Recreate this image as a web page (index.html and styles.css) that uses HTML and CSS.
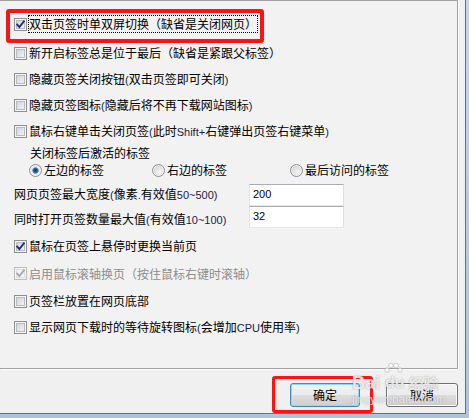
FILE: index.html
```html
<!DOCTYPE html>
<html lang="zh-CN">
<head>
<meta charset="utf-8">
<title>页签设置</title>
<link rel="stylesheet" href="styles.css">
</head>
<body>
<div class="dialog">
  <div class="panel">
    <div class="row row-first">
      <span class="cb"><svg class="tick" viewBox="0 0 9 9"><path d="M1.2 4.6 L3.4 7 L7.9 1.4"/></svg></span>
      <span class="lbl focus">双击页签时单双屏切换（缺省是关闭网页）</span>
    </div>
    <div class="row"><span class="cb"></span><span class="lbl">新开启标签总是位于最后（缺省是紧跟父标签）</span></div>
    <div class="row"><span class="cb"></span><span class="lbl">隐藏页签关闭按钮<span class="en">(</span>双击页签即可关闭<span class="en">)</span></span></div>
    <div class="row"><span class="cb"></span><span class="lbl">隐藏页签图标<span class="en">(</span>隐藏后将不再下载网站图标<span class="en">)</span></span></div>
    <div class="row"><span class="cb"></span><span class="lbl">鼠标右键单击关闭页签<span class="en">(</span>此时<span class="en">Shift+</span>右键弹出页签右键菜单<span class="en">)</span></span></div>
    <div class="group-title">关闭标签后激活的标签</div>
    <div class="radios">
      <div class="radio-item"><span class="rb on"></span><span class="lbl">左边的标签</span></div>
      <div class="radio-item"><span class="rb"></span><span class="lbl">右边的标签</span></div>
      <div class="radio-item"><span class="rb"></span><span class="lbl">最后访问的标签</span></div>
    </div>
    <div class="field">
      <span class="field-label">网页页签最大宽度<span class="en">(</span>像素<span class="en">.</span>有效值<span class="en">50~500)</span></span>
      <div class="tb">200</div>
    </div>
    <div class="field field-second">
      <span class="field-label">同时打开页签数量最大值<span class="en">(</span>有效值<span class="en">10~100)</span></span>
      <div class="tb">32</div>
    </div>
    <div class="row row-after-fields">
      <span class="cb"><svg class="tick" viewBox="0 0 9 9"><path d="M1.2 4.6 L3.4 7 L7.9 1.4"/></svg></span>
      <span class="lbl">鼠标在页签上悬停时更换当前页</span>
    </div>
    <div class="row row-disabled">
      <span class="cb"><svg class="tick" viewBox="0 0 9 9"><path d="M1.2 4.6 L3.4 7 L7.9 1.4"/></svg></span>
      <span class="lbl">启用鼠标滚轴换页（按住鼠标右键时滚轴）</span>
    </div>
    <div class="row"><span class="cb"></span><span class="lbl">页签栏放置在网页底部</span></div>
    <div class="row"><span class="cb"></span><span class="lbl">显示网页下载时的等待旋转图标<span class="en">(</span>会增加<span class="en">CPU</span>使用率<span class="en">)</span></span></div>
  </div>
  <div class="actions">
    <div class="btn btn-default">确定</div>
    <div class="btn btn-cancel">取消</div>
  </div>
</div>

<div class="mark mark-top"></div>
<div class="mark mark-ok"></div>

<div class="watermark">
  <div class="wm-logo">
    <span class="wm-bai">Bai</span>
    <span class="wm-du">
      <svg class="wm-paw" viewBox="0 0 20 14"><circle cx="4" cy="8" r="2.2"/><circle cx="8" cy="3.5" r="2.3"/><circle cx="13" cy="3.5" r="2.3"/><circle cx="17" cy="8" r="2.2"/></svg>
      du
    </span>
    <span class="wm-jy">经验</span>
  </div>
  <div class="wm-url">jingyan.baidu.com</div>
</div>
</body>
</html>
```

FILE: styles.css
```css
* { box-sizing: border-box; }

html, body {
  margin: 0;
  padding: 0;
}

body {
  width: 469px;
  height: 418px;
  overflow: hidden;
  position: relative;
  background: linear-gradient(180deg, #c3d7ec 0%, #b4cce6 60%, #a9c3e1 100%);
  font-family: "Noto Sans CJK SC", "Liberation Sans", sans-serif;
  font-size: 12px;
  line-height: 16px;
  color: #000;
}

.dialog {
  width: 466px;
  height: 414px;
  background: #f0f0f0;
  border-right: 1px solid #6f6f6f;
  border-bottom: 1px solid #6f6f6f;
}

.panel {
  width: 458px;
  height: 369px;
  background: #f2f2f2;
  border-top: 1px solid #a0a0a0;
  border-right: 1px solid #a0a0a0;
  border-bottom: 1px solid #a0a0a0;
  box-shadow: 1px 1px 0 #ffffff;
  padding: 10px 0 0 14px;
  display: flex;
  flex-direction: column;
}

.row {
  height: 26px;
  display: flex;
  align-items: center;
}

.row-first { margin-bottom: 3px; }
.row-after-fields { margin-top: 4px; }
.row-disabled { height: 29px; color: #8d8d8d; }

.lbl { white-space: nowrap; }

.focus {
  outline: 1px dotted #000;
  outline-offset: 0;
}

.en {
  font-family: "Liberation Sans", sans-serif;
  font-size: 11px;
  color: #1a1a48;
}

/* checkbox */
.cb {
  flex: none;
  width: 13px;
  height: 13px;
  margin-right: 2px;
  border: 1px solid #8e8f8f;
  background: linear-gradient(135deg, #c9ccd1 0%, #e4e6e8 55%, #f8f8f8 100%);
  box-shadow: inset 0 0 0 1px #f6f6f6, inset 0 0 0 2px #b7bbc0;
  display: flex;
  align-items: center;
  justify-content: center;
}

.tick {
  width: 9px;
  height: 9px;
  display: block;
}

.tick path {
  fill: none;
  stroke: #1f3374;
  stroke-width: 1.9;
  stroke-linecap: square;
}

.row-disabled .cb {
  border-color: #bcbcbc;
  background: #f4f4f4;
  box-shadow: inset 0 0 0 1px #f4f4f4, inset 0 0 0 2px #dedede;
}

.row-disabled .tick path { stroke: #a8a8a8; }

/* radio group */
.group-title {
  height: 18px;
  line-height: 18px;
  padding-left: 16px;
}

.radios {
  height: 16px;
  padding-left: 15px;
  display: grid;
  grid-template-columns: 123px 138px auto;
  align-items: center;
}

.radio-item {
  display: flex;
  align-items: center;
}

.rb {
  flex: none;
  width: 13px;
  height: 13px;
  margin-right: 2px;
  border-radius: 50%;
  border: 1px solid #8e8f8f;
  background: radial-gradient(circle at 60% 65%, #f7f7f7 0%, #dcdcdc 55%, #c4c7cb 100%);
  box-shadow: inset 0 0 0 1px #f4f4f4;
}

.rb.on {
  background: radial-gradient(circle at 50% 50%, #0f2a5a 0, #2a5ea6 2px, #6fa4dc 3px, #eaeaea 3.6px, #d6d6d6 100%);
}

/* number fields */
.field {
  height: 23px;
  margin-top: 5px;
  display: flex;
  align-items: center;
}

.field-second {
  margin-top: 0;
  align-items: flex-start;
}

.field-label {
  width: 235px;
  flex: none;
  white-space: nowrap;
}

.field-second .field-label {
  align-self: flex-end;
  line-height: 18px;
}

.tb {
  width: 95px;
  height: 22px;
  border: 1px solid;
  border-color: #abadb3 #dbdfe6 #e3e9ef #e2e3ea;
  background: #ffffff;
  padding: 2px 3px 0;
  font-family: "Liberation Sans", sans-serif;
  font-size: 11px;
  line-height: 14px;
}

/* buttons */
.actions {
  display: flex;
  justify-content: flex-end;
  gap: 26px;
  padding: 14px 7px 0 0;
}

.btn {
  height: 24px;
  border: 1px solid #707070;
  border-radius: 3px;
  background: linear-gradient(180deg, #f2f2f2 0%, #ebebeb 50%, #dddddd 51%, #cfcfcf 100%);
  box-shadow: inset 0 0 0 1px #fbfbfb;
  display: flex;
  align-items: center;
  justify-content: center;
  font-size: 12px;
}

.btn-default {
  width: 70px;
  border-color: #3b8cc6;
  box-shadow: inset 0 0 0 1px #8fd8f6;
}

.btn-cancel { width: 72px; }

/* red annotation boxes */
.mark {
  position: absolute;
  border: 4px solid #ff1212;
  border-radius: 3px;
}

.mark-top {
  left: 6px;
  top: 9px;
  width: 258px;
  height: 34px;
}

.mark-ok {
  left: 272px;
  top: 376px;
  width: 101px;
  height: 37px;
  border-width: 3px;
}

/* watermark */
.watermark {
  position: absolute;
  left: 352px;
  top: 366px;
  color: rgba(255, 255, 255, 0.8);
  text-shadow: 0 0 1px rgba(110, 110, 110, 0.55), 0 0 2px rgba(150, 150, 150, 0.35);
  pointer-events: none;
}

.wm-logo {
  display: flex;
  align-items: flex-end;
  height: 26px;
}

.wm-bai {
  font-family: "Liberation Sans", sans-serif;
  font-weight: bold;
  font-size: 18px;
  line-height: 18px;
}

.wm-du {
  position: relative;
  margin-left: 5px;
  font-family: "Liberation Sans", sans-serif;
  font-weight: bold;
  font-size: 16px;
  line-height: 18px;
}

.wm-paw {
  position: absolute;
  left: -2px;
  top: -12px;
  width: 20px;
  height: 14px;
}

.wm-paw circle {
  fill: rgba(255, 255, 255, 0.75);
  stroke: rgba(140, 140, 140, 0.5);
  stroke-width: 0.8;
}

.wm-jy {
  margin-left: 4px;
  font-size: 15px;
  line-height: 18px;
  font-weight: bold;
}

.wm-url {
  margin-top: 1px;
  font-family: "Liberation Sans", sans-serif;
  font-size: 11px;
  line-height: 12px;
  letter-spacing: 0.3px;
}
```
